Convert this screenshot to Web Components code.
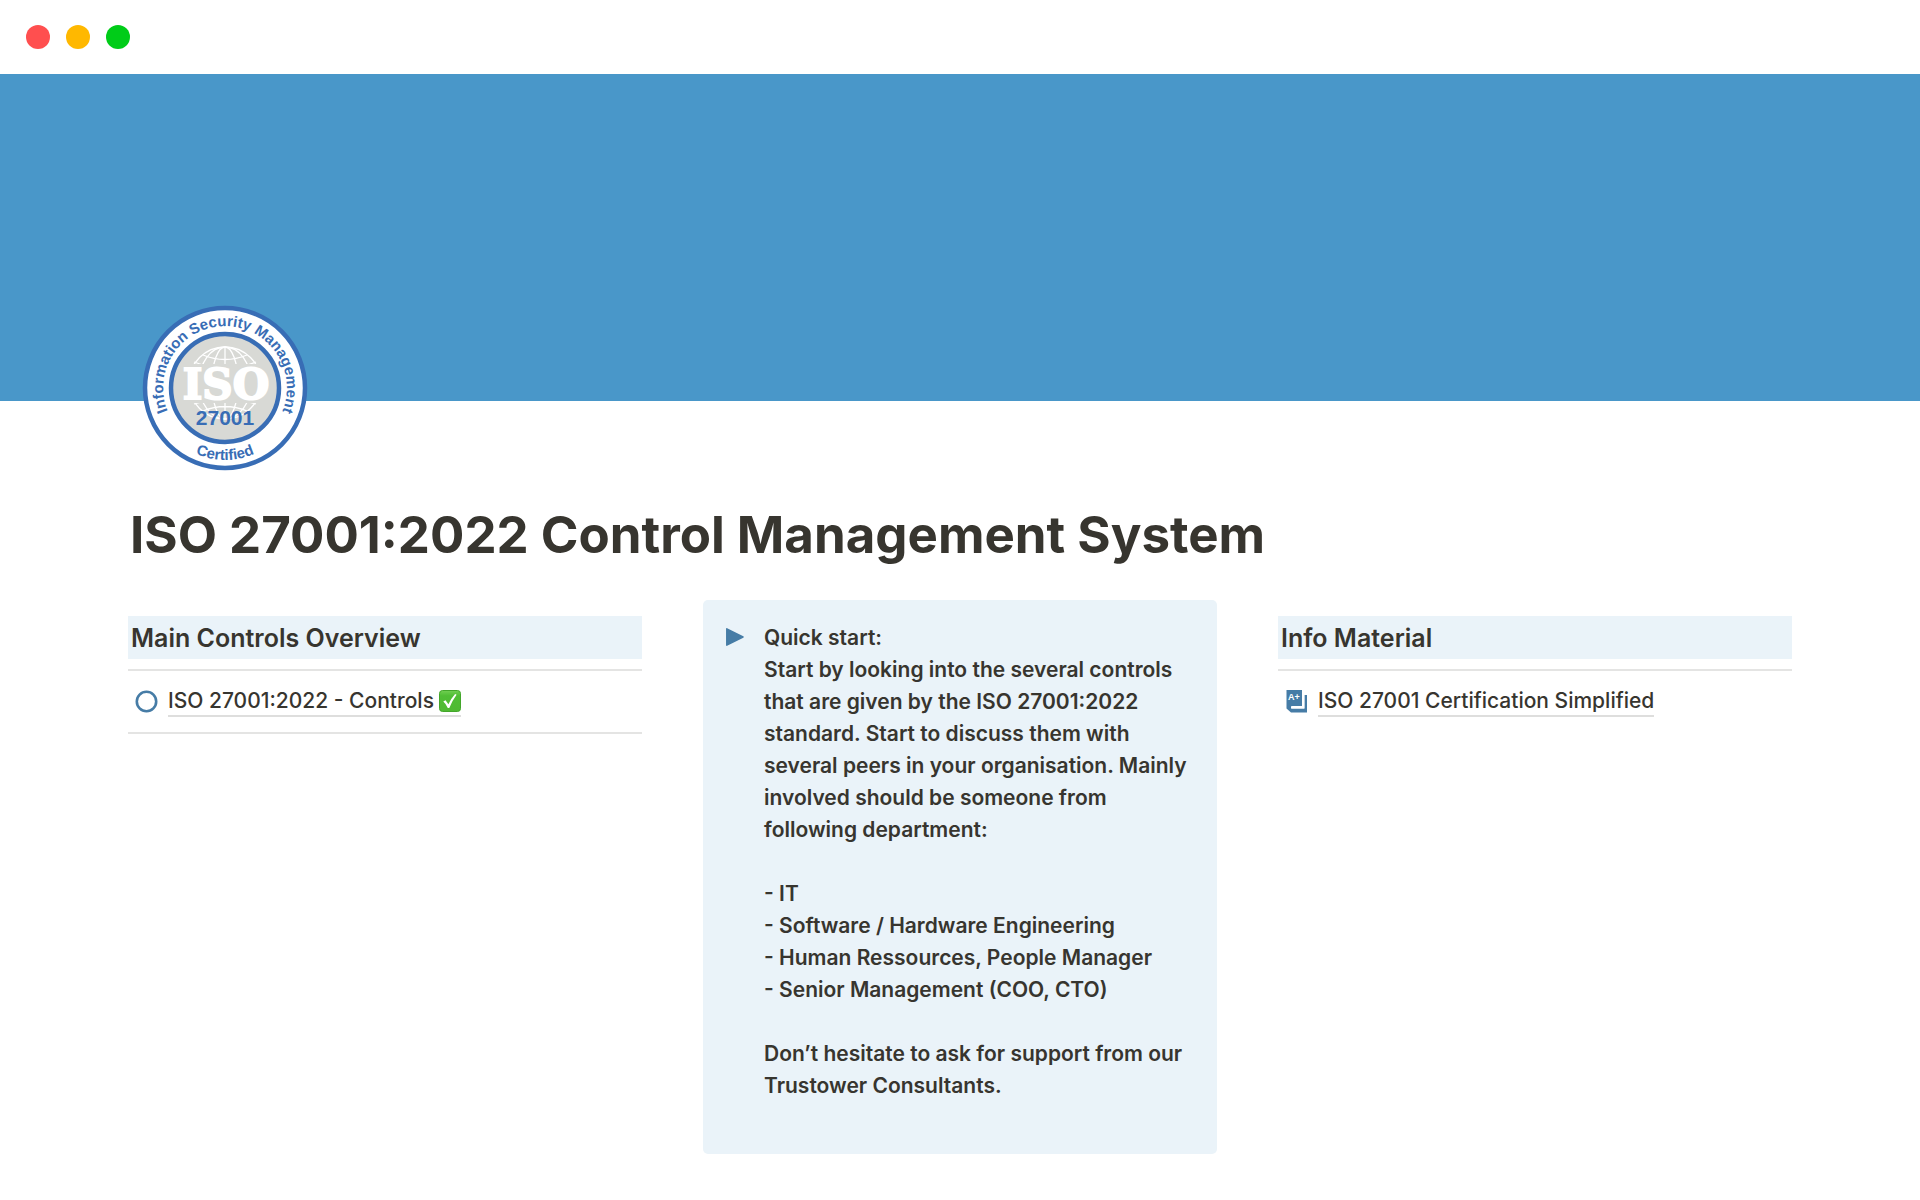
<!DOCTYPE html>
<html lang="en">
<head>
<meta charset="utf-8">
<title>ISO 27001:2022 Control Management System</title>
<style>
    body {
        margin: 0;
        background: #fff;
        color: #37352f;
        font-family: Inter, "Liberation Sans", sans-serif;
        font-size: 21px;
        line-height: 32px;
    }
</style>
</head>
<body>
<doc-page>
    <window-bar slot="bar"></window-bar>
    <iso-seal slot="icon"></iso-seal>
    <span slot="title">ISO 27001:2022 Control Management System</span>

    <doc-column>
        <section-heading>Main Controls Overview</section-heading>
        <doc-divider></doc-divider>
        <page-link icon="circle" check>ISO 27001:2022 - Controls</page-link>
        <doc-divider></doc-divider>
    </doc-column>

    <call-out>
        <p>Quick start:<br>Start by looking into the several controls that are given by the ISO 27001:2022 standard. Start to discuss them with several peers in your organisation. Mainly involved should be someone from following department:</p>
        <p>- IT<br>- Software / Hardware Engineering<br>- Human Ressources, People Manager<br>- Senior Management (COO, CTO)</p>
        <p>Don’t hesitate to ask for support from our Trustower Consultants.</p>
    </call-out>

    <doc-column>
        <section-heading>Info Material</section-heading>
        <doc-divider></doc-divider>
        <page-link icon="book">ISO 27001 Certification Simplified</page-link>
    </doc-column>
</doc-page>

<script>
function attach(el, html) {
    const template = document.createElement('template');
    template.innerHTML = html;
    el.attachShadow({ mode: 'open' });
    el.shadowRoot.appendChild(template.content.cloneNode(true));
}

class DocPage extends HTMLElement {
    constructor() {
        super();
        attach(this, `
<style>
    :host {
        display: block;
    }
    .cover {
        height: 327px;
        background: #4997c9;
    }
    main {
        padding: 0 128px 45px;
    }
    .icon {
        display: flex;
        margin: -96px 0 0 14px;
    }
    h1 {
        margin: 32px 0 33px;
        padding: 0 2px;
        font-size: 51px;
        line-height: 64px;
        font-weight: 700;
    }
    .columns {
        display: grid;
        grid-template-columns: repeat(3, minmax(0, 1fr));
        gap: 61px;
        align-items: start;
    }
</style>
<slot name="bar"></slot>
<div class="cover"></div>
<main>
    <div class="icon"><slot name="icon"></slot></div>
    <h1><slot name="title"></slot></h1>
    <div class="columns"><slot></slot></div>
</main>`);
    }
}

class WindowBar extends HTMLElement {
    constructor() {
        super();
        attach(this, `
<style>
    :host {
        display: flex;
        align-items: center;
        gap: 16px;
        height: 74px;
        padding: 0 26px;
    }
    button {
        width: 24px;
        height: 24px;
        padding: 0;
        border: 0;
        border-radius: 50%;
    }
    .close { background: #ff4f4f; }
    .minimize { background: #ffb800; }
    .zoom { background: #00cc18; }
</style>
<button class="close" aria-label="Close"></button>
<button class="minimize" aria-label="Minimize"></button>
<button class="zoom" aria-label="Zoom"></button>`);
    }
}

class IsoSeal extends HTMLElement {
    constructor() {
        super();
        attach(this, `
<style>
    :host {
        display: block;
        width: 166px;
        height: 166px;
    }
    svg {
        display: block;
    }
    text {
        font-family: "Liberation Sans", sans-serif;
        font-weight: 700;
        fill: #386db5;
        text-anchor: middle;
    }
    .ring { font-size: 15px; }
    .number { font-size: 21px; }
    .iso {
        font-family: "DejaVu Serif", serif;
        font-size: 42px;
        fill: #fff;
        stroke: #fff;
        stroke-width: 2px;
    }
</style>
<svg width="166" height="166" viewBox="-83 -83 166 166">
    <defs>
        <path id="top" d="M-39.2 47.9A61.9 61.9 0 1 1 39.2 47.9"/>
        <path id="bottom" d="M-72 0A72 72 0 0 0 72 0"/>
        <clipPath id="caps"><path d="M-40-45H40V-24H-40zM-40 15H40V34H-40z"/></clipPath>
    </defs>
    <circle r="80" fill="#fff" stroke="#386db5" stroke-width="4.5"/>
    <circle r="54" fill="#d8d9d5" stroke="#386db5" stroke-width="4.5"/>
    <g clip-path="url(#caps)" fill="none" stroke="#fff" stroke-width="1.3">
        <circle cy="-5" r="36"/>
        <ellipse cy="-5" rx="13" ry="36"/>
        <ellipse cy="-5" rx="26" ry="36"/>
        <path d="M0-41V31M-22-33Q0-24 22-33M-31-26Q0-14 31-26M-31 16Q0 6 31 16M-22 23Q0 14 22 23"/>
    </g>
    <text class="iso" x="1" y="11">ISO</text>
    <text class="number" x="0" y="37">27001</text>
    <text class="ring"><textPath href="#top" startOffset="50%">Information Security Management</textPath></text>
    <text class="ring"><textPath href="#bottom" startOffset="50%">Certified</textPath></text>
</svg>`);
    }
}

class DocColumn extends HTMLElement {
    constructor() {
        super();
        attach(this, `
<style>
    :host {
        display: block;
        padding-top: 16px;
    }
</style>
<slot></slot>`);
    }
}

class SectionHeading extends HTMLElement {
    constructor() {
        super();
        attach(this, `
<style>
    :host {
        display: block;
        margin-bottom: 10px;
        background: #eaf3f9;
    }
    h2 {
        margin: 0;
        padding: 6px 3px 5px;
        font-size: 25px;
        line-height: 32px;
        font-weight: 600;
    }
</style>
<h2><slot></slot></h2>`);
    }
}

class DocDivider extends HTMLElement {
    constructor() {
        super();
        attach(this, `
<style>
    :host {
        display: block;
    }
    hr {
        margin: 0;
        border: 0;
        border-top: 2px solid #e4e4e3;
    }
</style>
<hr>`);
    }
}

const icons = {
    circle: '<svg width="24" height="24" viewBox="0 0 24 24"><circle cx="11.5" cy="11.5" r="9.7" fill="none" stroke="#467ca6" stroke-width="2.6"/></svg>',
    book: `<svg width="24" height="24" viewBox="0 0 24 24" fill="#467ca6">
        <path d="M1.5 0H17V16H7.5Q6 16 6 17.3T7.5 18.5H19.5V5H22V22.5H6L1.5 18.5z"/>
        <path d="M6 16.5H17V5H19.3V18.5H6z" fill="#fff"/>
        <text x="3" y="10" fill="#fff">A+</text>
    </svg>`
};

const check = `<svg class="check" role="img" aria-label="Done" width="22" height="22" viewBox="0 0 22 22">
    <defs><linearGradient id="g" x2="0" y2="1"><stop stop-color="#71cf52"/><stop offset=".25" stop-color="#50be35"/><stop offset="1" stop-color="#4fb932"/></linearGradient></defs>
    <rect x=".5" y=".5" width="21" height="21" rx="3" fill="url(#g)" stroke="#43a62b"/>
    <path d="M4.3 11.6L6.5 10.2L9.4 14.2Q12 8.6 16.1 4L17.6 4.8Q13 11 10.3 18H8.8Q7 14 4.3 11.6z" fill="#fff"/>
</svg>`;

class PageLink extends HTMLElement {
    constructor() {
        super();
        attach(this, `
<style>
    :host {
        display: flex;
        align-items: center;
        gap: 9px;
        padding: 16px 7px 15px;
    }
    svg {
        display: block;
        flex: none;
    }
    text {
        font: 700 9px "Liberation Sans", sans-serif;
    }
    a {
        display: flex;
        align-items: center;
        gap: 5px;
        border-bottom: 2px solid #dededd;
        color: inherit;
        line-height: 28px;
        font-weight: 500;
        text-decoration: none;
    }
</style>
${icons[this.getAttribute('icon')]}
<a href="#"><slot></slot>${this.hasAttribute('check') ? check : ''}</a>`);
    }
}

class CallOut extends HTMLElement {
    constructor() {
        super();
        attach(this, `
<style>
    :host {
        display: flex;
        gap: 20px;
        padding: 22px 28px 52px 23px;
        border-radius: 5px;
        background: #eaf3f9;
        font-weight: 600;
    }
    svg {
        flex: none;
        margin-top: 6px;
    }
    .text {
        display: flex;
        flex-direction: column;
        gap: 32px;
    }
    ::slotted(p) {
        margin: 0;
    }
</style>
<svg width="18" height="18" viewBox="0 0 18 18"><path d="M.8.8L17 9L.8 17.2z" fill="#467ca6" stroke="#467ca6" stroke-width="1.5" stroke-linejoin="round"/></svg>
<div class="text"><slot></slot></div>`);
    }
}

customElements.define('doc-page', DocPage);
customElements.define('window-bar', WindowBar);
customElements.define('iso-seal', IsoSeal);
customElements.define('doc-column', DocColumn);
customElements.define('section-heading', SectionHeading);
customElements.define('doc-divider', DocDivider);
customElements.define('page-link', PageLink);
customElements.define('call-out', CallOut);
</script>
</body>
</html>
